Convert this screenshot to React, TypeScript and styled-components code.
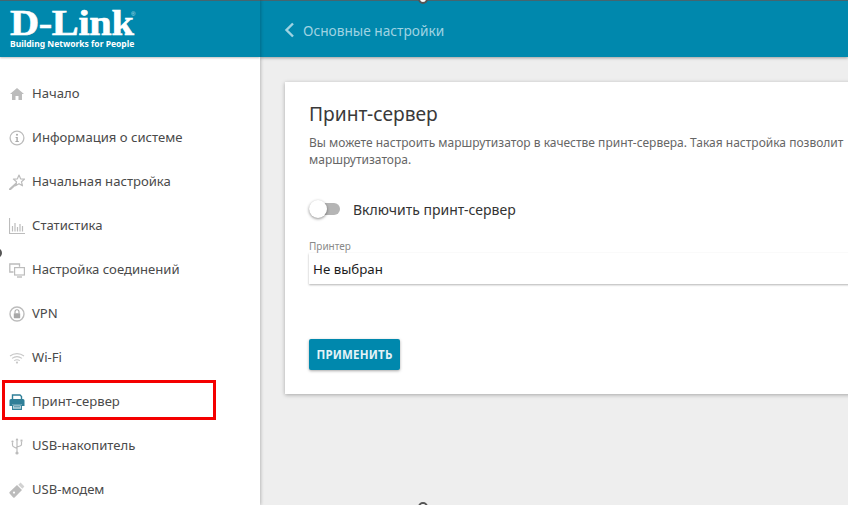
import styled, { createGlobalStyle } from "styled-components";
import type { ReactNode } from "react";

const GlobalStyle = createGlobalStyle`
	html, body {
		margin: 0;
		padding: 0;
		background: #eeeeee;
	}
	* {
		box-sizing: border-box;
	}
`;

const Page = styled.div`
	position: relative;
	width: 848px;
	height: 505px;
	overflow: hidden;
	display: flex;
	background: #eeeeee;
	font-family: "Noto Sans", "Open Sans", sans-serif;
`;

const Sidebar = styled.aside`
	width: 260px;
	height: 505px;
	flex-shrink: 0;
	background: #fff;
	box-shadow: 1px 0 3px rgba(0, 0, 0, 0.22);
	z-index: 2;
	overflow: hidden;
`;

const LogoBar = styled.div`
	height: 57px;
	background: #0088ad;
	border-top: 1px solid #45656f;
	padding: 7px 0 0 10px;
	box-shadow: 0 1px 2px rgba(0, 0, 0, 0.25);
	color: #fff;
`;

const LogoWord = styled.div`
	position: relative;
	width: 125px;
	height: 30px;
	display: flex;
`;

const LogoText = styled.span`
	display: block;
	font-family: "Liberation Serif", serif;
	font-weight: 700;
	font-size: 36px;
	line-height: 31px;
	letter-spacing: -0.3px;
	-webkit-text-stroke: 0.6px #fff;
	transform: scaleX(1.12);
	transform-origin: left center;
`;

const LogoMark = styled.span`
	position: absolute;
	left: 121px;
	top: 3px;
	font-family: "Liberation Sans", sans-serif;
	font-size: 6px;
	line-height: 6px;
	opacity: 0.7;
`;

const LogoTag = styled.div`
	font-family: "Noto Sans", sans-serif;
	font-weight: 700;
	font-size: 8.5px;
	line-height: 12px;
	white-space: nowrap;
`;

const Nav = styled.nav`
	padding-top: 13.6px;
`;

const NavItem = styled.div`
	position: relative;
	height: 44.1px;
	display: flex;
	align-items: center;
	padding-left: 9px;
	gap: 7px;
	font-size: 13.1px;
	color: #4a4a4a;
	white-space: nowrap;
`;

const IconSlot = styled.span`
	width: 16px;
	height: 18px;
	display: flex;
	align-items: center;
	justify-content: center;
	flex-shrink: 0;
	margin-top: 2px;
`;

const Highlight = styled.div`
	position: absolute;
	left: 2px;
	top: 1px;
	width: 214px;
	height: 40px;
	border: 3px solid #f40000;
`;

const Main = styled.main`
	flex: 1;
	min-width: 0;
	display: flex;
	flex-direction: column;
`;

const TopBar = styled.header`
	height: 57px;
	flex-shrink: 0;
	background: #0088ad;
	border-top: 1px solid #45656f;
	box-shadow: 0 1px 3px rgba(0, 0, 0, 0.35);
	display: flex;
	align-items: center;
	padding: 2px 0 0 24px;
	gap: 8px;
	color: #9fd3e2;
	font-size: 13.7px;
	white-space: nowrap;
`;

const Content = styled.div`
	padding: 25px 0 0 25px;
`;

const Card = styled.section`
	width: 640px;
	height: 312px;
	background: #fff;
	box-shadow: 0 1px 4px rgba(0, 0, 0, 0.3);
	padding: 18px 24px 0;
`;

const Title = styled.h1`
	margin: 0;
	font-size: 19.2px;
	line-height: 27px;
	font-weight: 400;
	color: #3a3a3a;
`;

const Description = styled.p`
	margin: 7px 0 0;
	font-size: 12px;
	line-height: 17px;
	color: #666;
	white-space: nowrap;
`;

const SwitchRow = styled.div`
	margin-top: 29px;
	height: 24px;
	display: flex;
	align-items: center;
	gap: 13px;
	font-size: 14px;
	color: #333;
`;

const SwitchTrack = styled.span`
	position: relative;
	width: 31px;
	height: 12px;
	border-radius: 6px;
	background: #b5b5b5;
`;

const SwitchKnob = styled.span`
	position: absolute;
	left: 0;
	top: -3px;
	width: 18px;
	height: 18px;
	border-radius: 50%;
	background: #fff;
	box-shadow: 0 1px 3px rgba(0, 0, 0, 0.45);
`;

const FieldLabel = styled.div`
	margin-top: 19px;
	font-size: 10px;
	line-height: 13px;
	color: #8a8a8a;
`;

const Select = styled.div`
	height: 31px;
	display: flex;
	align-items: center;
	padding-left: 4px;
	background: #fff;
	box-shadow: 0 1px 2px rgba(0, 0, 0, 0.3);
	font-size: 13.3px;
	color: #1c1c1c;
`;

const ApplyButton = styled.button`
	display: block;
	margin-top: 55px;
	width: 91px;
	height: 31px;
	border: none;
	border-radius: 2px;
	padding: 0;
	background: #0088ad;
	box-shadow: 0 1px 3px rgba(0, 0, 0, 0.35);
	color: #e4f3f7;
	font-family: inherit;
	font-weight: 700;
	font-size: 11.5px;
	letter-spacing: 0.2px;
`;

const Handle = styled.span<{ $left: number; $top: number }>`
	position: absolute;
	left: ${(p) => p.$left}px;
	top: ${(p) => p.$top}px;
	width: 10px;
	height: 10px;
	border-radius: 50%;
	background: #fff;
	border: 2px solid #555;
	z-index: 5;
`;

const grey = "#bcbcbc";

const HomeIcon = () => (
	<svg width="14" height="12" viewBox="0 0 14 12">
		<path d="M7 0 L14 6 H12 V12 H8.5 V8 H5.5 V12 H2 V6 H0 Z" fill={grey} />
	</svg>
);

const InfoIcon = () => (
	<svg width="16" height="16" viewBox="0 0 16 16">
		<circle cx="8" cy="8" r="6.9" fill="none" stroke={grey} strokeWidth="1.3" />
		<circle cx="8" cy="4.8" r="1" fill="#a8a8a8" />
		<path d="M6.6 7 H8.8 V11 H9.8 V12 H6.4 V11 H7.4 V8 H6.6 Z" fill="#a8a8a8" />
	</svg>
);

const StarIcon = () => (
	<svg width="16" height="16" viewBox="0 0 16 16">
		<path
			d="M10 1 L11.6 4.8 L15.6 5.1 L12.5 7.8 L13.5 11.8 L10 9.7 L6.5 11.8 L7.5 7.8 L4.4 5.1 L8.4 4.8 Z"
			fill="none"
			stroke={grey}
			strokeWidth="1.2"
			strokeLinejoin="round"
		/>
		<path d="M1 15.3 L6.8 10" stroke={grey} strokeWidth="2.2" strokeLinecap="round" />
	</svg>
);

const ChartIcon = () => (
	<svg width="16" height="16" viewBox="0 0 16 16">
		<path
			d="M0.5 0 V15.5 H16 M3.5 8 V13.5 M6 5 V13.5 M8.5 9 V13.5 M11 6 V13.5 M13.5 8 V13.5"
			fill="none"
			stroke={grey}
			strokeWidth="1.2"
		/>
	</svg>
);

const ScreensIcon = () => (
	<svg width="16" height="15" viewBox="0 0 16 15">
		<path d="M4.5 9 H0.8 V1 H10.5 V3.8" fill="none" stroke={grey} strokeWidth="1.3" />
		<rect x="5.6" y="4.6" width="9.8" height="7.4" fill="none" stroke={grey} strokeWidth="1.2" />
		<path d="M8 14 H13" stroke={grey} strokeWidth="1.4" />
	</svg>
);

const LockIcon = () => (
	<svg width="16" height="16" viewBox="0 0 16 16">
		<circle cx="8" cy="8" r="7" fill="none" stroke={grey} strokeWidth="1.4" />
		<rect x="4.8" y="7.2" width="6.4" height="5" rx="0.6" fill="#a8a8a8" />
		<path d="M6 7.2 V5.8 a2 2 0 0 1 4 0 V7.2" fill="none" stroke="#a8a8a8" strokeWidth="1.1" />
	</svg>
);

const WifiIcon = () => (
	<svg width="16" height="12" viewBox="0 0 16 12">
		<path
			d="M1 4 C5 0.8 11 0.8 15 4 M3 6.4 C6 4.2 10 4.2 13 6.4 M5.2 8.6 C7 7.5 9 7.5 10.8 8.6"
			fill="none"
			stroke="#c8c8c8"
			strokeWidth="1.1"
		/>
		<circle cx="8" cy="10.6" r="1.1" fill="#c8c8c8" />
	</svg>
);

const PrinterIcon = () => (
	<svg width="16" height="16" viewBox="0 0 16 16">
		<path d="M3.5 5 V1 H11 L12.5 2.5 V5" fill="none" stroke="#2f7f98" strokeWidth="1.4" />
		<path d="M0.5 6.5 Q0.5 5 2 5 H14 Q15.5 5 15.5 6.5 V12 H13 V10 H3 V12 H0.5 Z" fill="#2f7f98" />
		<path d="M3.7 10.8 H12.3 V15.3 H3.7 Z" fill="#fff" stroke="#2f7f98" strokeWidth="1.3" />
		<path d="M5 12.4 H11 M5 13.9 H11" stroke="#2f7f98" strokeWidth="0.8" />
	</svg>
);

const UsbIcon = () => (
	<svg width="12" height="17" viewBox="0 0 12 17">
		<path
			d="M6 1 V14.5 M1.5 4.5 V7 Q1.5 8.5 3 9 L6 10.5 M10.5 3.5 V6.5 Q10.5 7.5 9 8 L6 9"
			fill="none"
			stroke={grey}
			strokeWidth="1.2"
		/>
		<circle cx="6" cy="15" r="1.6" fill={grey} />
		<path d="M6 0 L7.5 2.2 H4.5 Z" fill={grey} />
		<circle cx="1.5" cy="3.6" r="1.1" fill={grey} />
		<rect x="9.5" y="1.6" width="2" height="2" fill={grey} />
	</svg>
);

const StickIcon = () => (
	<svg width="16" height="16" viewBox="0 0 16 16">
		<path d="M0.6 10 L8 3 L13 8 L5.6 15.4 Q5 16 4.2 15.4 L0.6 11.6 Q0 10.8 0.6 10 Z" fill={grey} />
		<path d="M9.3 2.7 L11.6 0.6 L15.4 4.4 L13.3 6.7 Z" fill="#d2d2d2" />
		<circle cx="5" cy="10.6" r="1.1" fill="#fff" />
	</svg>
);

const ChevronIcon = () => (
	<svg width="11" height="16" viewBox="0 0 11 16">
		<path d="M9 1.5 L2.5 8 L9 14.5" fill="none" stroke="#9fd3e2" strokeWidth="2.4" />
	</svg>
);

const menu: { label: string; icon: ReactNode; active?: boolean }[] = [
	{ label: "Начало", icon: <HomeIcon /> },
	{ label: "Информация о системе", icon: <InfoIcon /> },
	{ label: "Начальная настройка", icon: <StarIcon /> },
	{ label: "Статистика", icon: <ChartIcon /> },
	{ label: "Настройка соединений", icon: <ScreensIcon /> },
	{ label: "VPN", icon: <LockIcon /> },
	{ label: "Wi-Fi", icon: <WifiIcon /> },
	{ label: "Принт-сервер", icon: <PrinterIcon />, active: true },
	{ label: "USB-накопитель", icon: <UsbIcon /> },
	{ label: "USB-модем", icon: <StickIcon /> },
];

const App = () => {
	return (
		<Page>
			<GlobalStyle />
			<Sidebar>
				<LogoBar>
					<LogoWord>
						<LogoText>D-Link</LogoText>
						<LogoMark>®</LogoMark>
					</LogoWord>
					<LogoTag>Building Networks for People</LogoTag>
				</LogoBar>
				<Nav>
					{menu.map((item) => (
						<NavItem key={item.label}>
							<IconSlot>{item.icon}</IconSlot>
							{item.label}
							{item.active && <Highlight />}
						</NavItem>
					))}
				</Nav>
			</Sidebar>
			<Main>
				<TopBar>
					<ChevronIcon />
					Основные настройки
				</TopBar>
				<Content>
					<Card>
						<Title>Принт-сервер</Title>
						<Description>
							Вы можете настроить маршрутизатор в качестве принт-сервера. Такая настройка позволит
							<br />
							маршрутизатора.
						</Description>
						<SwitchRow>
							<SwitchTrack>
								<SwitchKnob />
							</SwitchTrack>
							Включить принт-сервер
						</SwitchRow>
						<FieldLabel>Принтер</FieldLabel>
						<Select>Не выбран</Select>
						<ApplyButton>ПРИМЕНИТЬ</ApplyButton>
					</Card>
				</Content>
			</Main>
			<Handle $left={418} $top={-6} />
			<Handle $left={-8} $top={248} />
			<Handle $left={418} $top={502} />
		</Page>
	);
};

export default App;
